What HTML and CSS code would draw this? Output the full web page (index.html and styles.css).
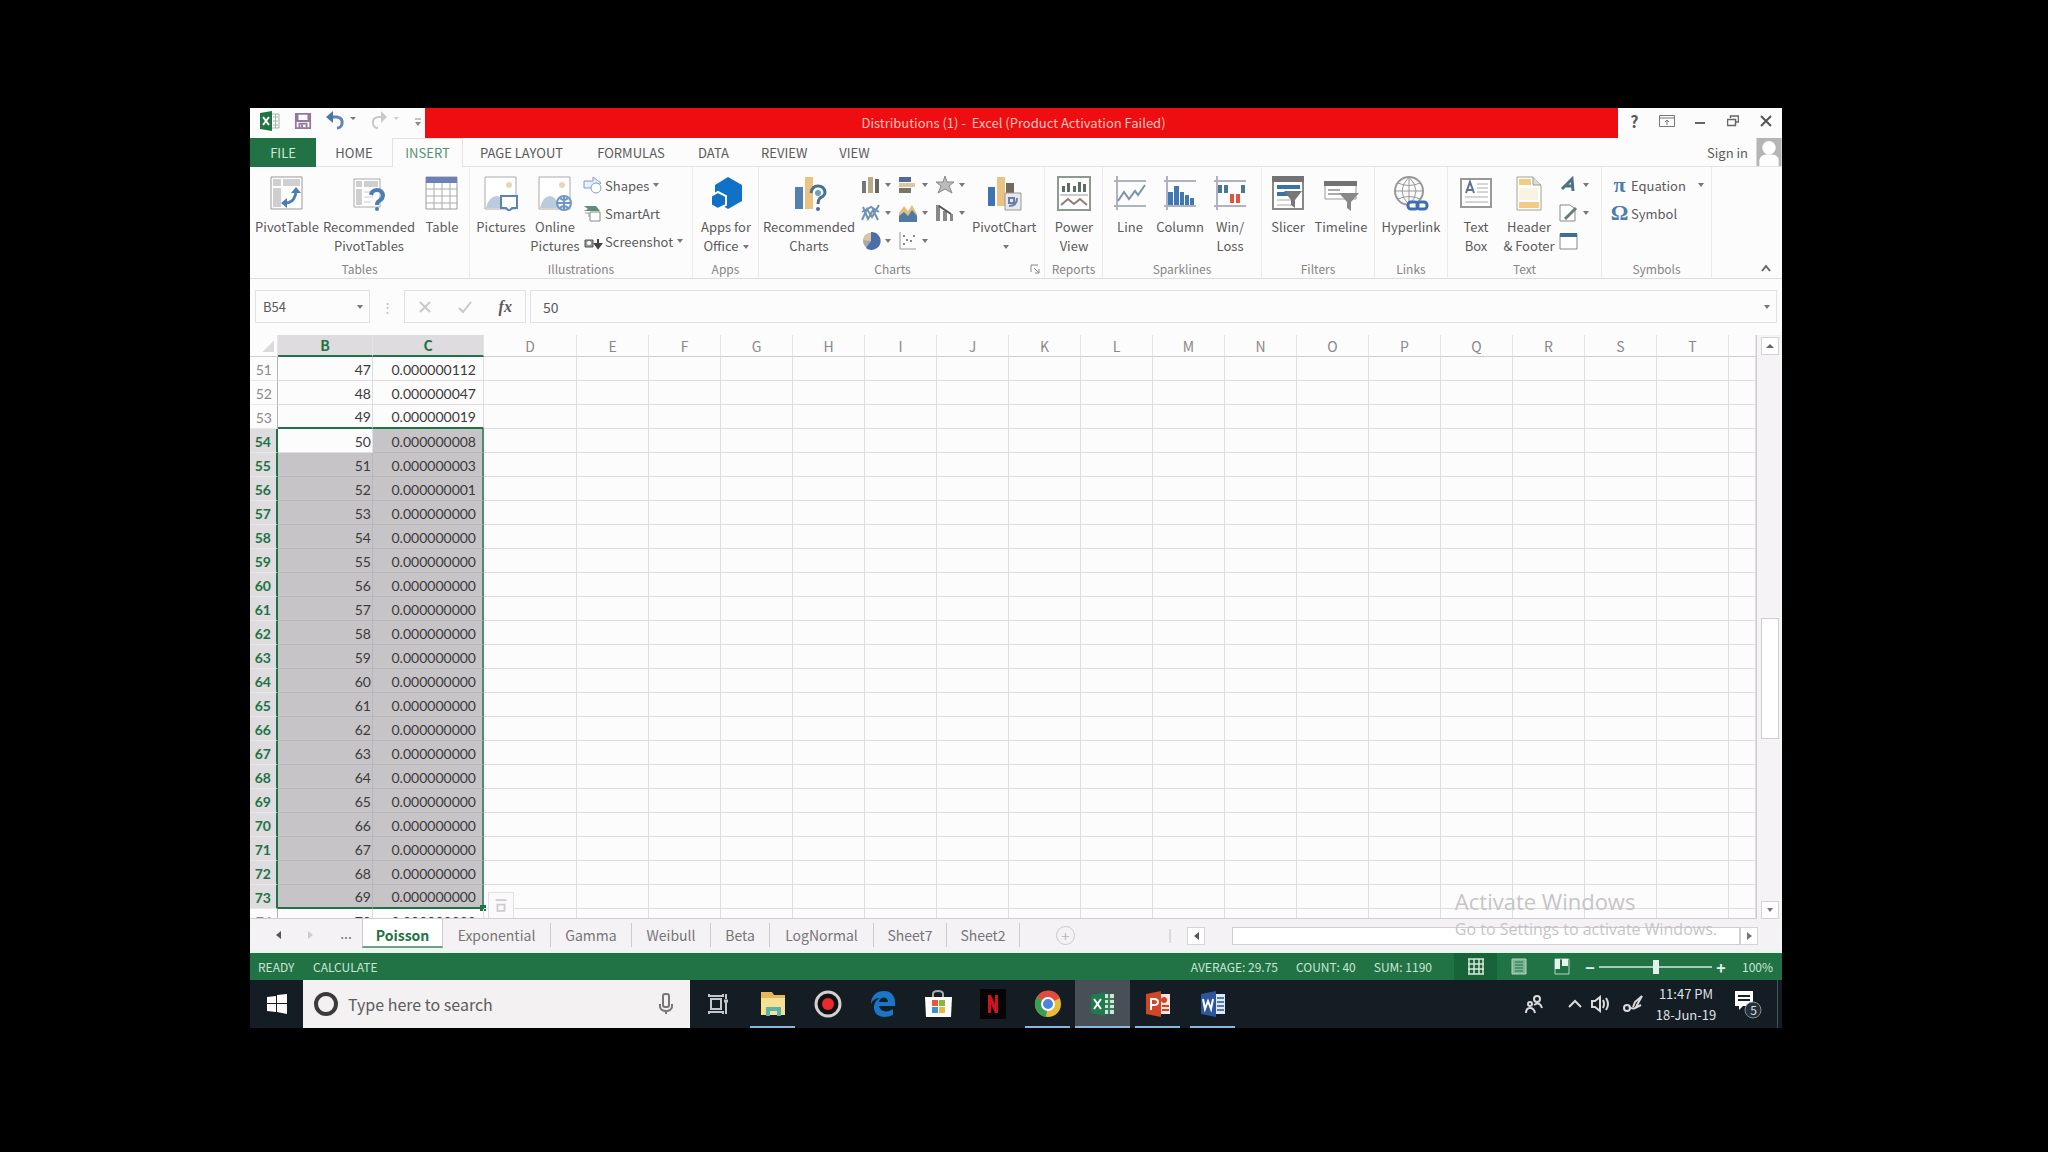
FILE: index.html
```html
<!DOCTYPE html>
<html lang="en">
<head>
  <meta charset="UTF-8" />
  <meta name="viewport" content="width=device-width, initial-scale=1.0" />
  <title>Distributions (1) - Excel</title>
  <link rel="stylesheet" href="styles.css">
</head>
<body>
<div class="screen">

  <!-- title bar -->
  <header class="titlebar">
    <div class="quick">
      <button aria-label="Excel"><svg width="20" height="20" viewBox="0 0 20 20"><path d="M0 2l12-2v20L0 18z" fill="#217346"/><path d="M12 3h7v14h-7" fill="#fff" stroke="#9bb8a6"/><path d="M13 6h5M13 10h5M13 14h5M15.500 3v14" stroke="#9bb8a6"/><path d="M3 6l6 8M9 6l-6 8" stroke="#fff" stroke-width="2"/></svg></button>
      <button aria-label="Save"><svg width="18" height="18" viewBox="0 0 20 20" fill="none" stroke="#94789f" stroke-width="2"><path d="M2 2h16v16H2zM4 2v8h12V2M6 18v-5h8v5M9 14v4"/></svg></button>
      <button class="wide" aria-label="Undo"><svg width="30" height="20" viewBox="0 0 30 20"><path d="M3 6h8q6 1 5 7q-1 4-5 4" fill="none" stroke="#5f84b0" stroke-width="3"/><path d="M0 6l7-6v12z" fill="#4b76a8"/><path d="M24 6h6l-3 3z" fill="#777"/></svg></button>
      <button class="wide" aria-label="Redo"><svg width="30" height="20" viewBox="0 0 30 20"><path d="M14 6H8q-6 1-5 7q1 4 5 4" fill="none" stroke="#c9c9c9" stroke-width="2"/><path d="M17 6l-6-6v12z" fill="#c9c9c9"/><path d="M24 6h5l-3 3z" fill="#ccc"/></svg></button>
      <button class="tiny" aria-label="Customize"><svg width="8" height="12" viewBox="0 0 8 12"><path d="M1 4h6" stroke="#888"/><path d="M1 7h6l-3 4z" fill="#888"/></svg></button>
    </div>
    <h1 class="title">Distributions (1) -&nbsp; Excel (Product Activation Failed)</h1>
    <div class="window-buttons">
      <button class="help" aria-label="Help">?</button>
      <button aria-label="Ribbon display"><svg width="16" height="12" viewBox="0 0 16 12" fill="none" stroke="#777"><path d="M.5.5h15v11H.5zM1 3h14M8 10V5M6 7l2-2 2 2" /></svg></button>
      <button aria-label="Minimize"><svg width="12" height="12" viewBox="0 0 12 12"><path d="M1 8h10" stroke="#666" stroke-width="2"/></svg></button>
      <button aria-label="Restore"><svg width="12" height="12" viewBox="0 0 12 12" fill="none" stroke="#666"><path d="M3.500 3V1h8v6h-3M.5 4.500h8v6h-8z" stroke-width="1.500"/></svg></button>
      <button aria-label="Close"><svg width="12" height="12" viewBox="0 0 12 12"><path d="M1 1l10 10M11 1L1 11" stroke="#555" stroke-width="2"/></svg></button>
    </div>
  </header>

  <nav class="tabs">
    <button class="file">FILE</button>
    <button class="home">HOME</button>
    <button class="active">INSERT</button>
    <button class="layout">PAGE LAYOUT</button>
    <button class="formulas">FORMULAS</button>
    <button>DATA</button>
    <button>REVIEW</button>
    <button>VIEW</button>
    <a class="signin" href="#">Sign in</a>
    <svg class="avatar" width="26" height="28" viewBox="0 0 26 29"><path d="M0 0h26v29H0z" fill="#b5b5b5"/><circle cx="13" cy="10" r="7" fill="#fff"/><path d="M3 29v-6q1-5 6-6h8q6 1 6 6v6z" fill="#fff"/></svg>
  </nav>

  <!-- ribbon -->
  <section class="ribbon">
    <div class="group g-tables">
      <div class="tools">
        <button class="big w70"><svg width="36" height="36" viewBox="0 0 36 36"><path d="M2 2h31v32H2z" fill="#fff" stroke="#999"/><path d="M4 4h8v7H4zM14 4h17v7H14zM4 13h8v19H4z" fill="#d0cfd0"/><path d="M14 28q12 1 13-12" fill="none" stroke="#4a7fb5" stroke-width="3"/><path d="M22 18l5-6 5 6zM18 23l-6 5 6 5z" fill="#4a7fb5"/></svg>PivotTable</button>
        <button class="big w94"><svg width="36" height="36" viewBox="0 0 36 36"><path d="M3 4h26v28H3z" fill="#fff" stroke="#aaa"/><path d="M5 6h6v6H5zM13 6h14v6H13zM5 14h6v16H5z" fill="#d0cfd0"/><path d="M13 17h9M13 22h9M13 27h7" stroke="#ccc"/><path d="M20 20q1-5 6-5t6 5q0 4-4 6-2 1-2 4" fill="none" stroke="#4a7fb5" stroke-width="4"/><circle cx="26" cy="34" r="2" fill="#4a7fb5"/></svg>Recommended<br>PivotTables</button>
        <button class="big w52"><svg width="36" height="36" viewBox="0 0 36 36"><path d="M2 2h31v32H2z" fill="#fff" stroke="#999"/><path d="M2 2h31v6H2z" fill="#6b7fb8"/><path d="M2 14h31M2 21h31M2 28h31M10 8v26M18 8v26M26 8v26" stroke="#aaa"/></svg>Table</button>
      </div>
      <div class="caption">Tables</div>
    </div>

    <div class="group g-illus">
      <div class="tools">
        <button class="big w58"><svg width="36" height="36" viewBox="0 0 36 36"><path d="M2 2h31v32H2z" fill="#fff" stroke="#aaa"/><circle cx="26" cy="10" r="3" fill="#e3d9b8"/><path d="M3 33q3-12 11-12 6 0 9 12z" fill="#b9cbdc"/><path d="M18 21h16v12h-5l-3 3-3-3h-5z" fill="#fff" stroke="#5b83b3" stroke-width="2"/></svg>Pictures</button>
        <button class="big w50"><svg width="36" height="36" viewBox="0 0 36 36"><path d="M2 2h31v32H2z" fill="#fff" stroke="#aaa"/><circle cx="25" cy="10" r="3" fill="#e3d9b8"/><path d="M3 33q3-12 10-12 6 0 9 12z" fill="#b9cbdc"/><g fill="#fff" stroke="#6f96c4" stroke-width="2"><circle cx="27" cy="28" r="7"/><path d="M20 28h14M27 21v14M23 23q4 4 8 0M23 33q4-4 8 0"/></g></svg>Online<br>Pictures</button>
        <div class="stack">
          <button class="small"><svg width="20" height="18" viewBox="0 0 20 18"><path d="M1 5h9V1l8 6-7 5H1z" fill="#e7eef6" stroke="#7f9fc4"/><circle cx="13" cy="12" r="5" fill="#fff" stroke="#7f9fc4"/></svg>Shapes<i></i></button>
          <button class="small"><svg width="20" height="18" viewBox="0 0 20 18"><path d="M1 2h12l4 5H1l4-2z" fill="#5c8f79"/><path d="M7 8h10v9H7z" fill="#fff" stroke="#888"/><path d="M2 9h4v4" fill="none" stroke="#999"/></svg>SmartArt</button>
          <button class="small"><svg width="20" height="18" viewBox="0 0 20 18"><path d="M2 8h8v7H2z" fill="#999" stroke="#555"/><circle cx="6" cy="11" r="2" fill="#fff"/><path d="M15 7v8M12 12h6M15 16l-3-4h6z" stroke="#444" stroke-width="2"/></svg>Screenshot<i></i></button>
        </div>
      </div>
      <div class="caption">Illustrations</div>
    </div>

    <div class="group g-apps">
      <div class="tools">
        <button class="big w62"><svg width="36" height="36" viewBox="0 0 36 36"><path d="M20 2l14 8v16l-14 8-13-8V10z" fill="#0f72c6"/><path d="M10 17l8 4v9l-8 4-7-4v-9z" fill="#0f72c6" stroke="#fff" stroke-width="2"/></svg>Apps for<br>Office<i></i></button>
      </div>
      <div class="caption">Apps</div>
    </div>

    <div class="group g-charts">
      <div class="tools">
        <button class="big w96"><svg width="36" height="36" viewBox="0 0 36 36"><path d="M4 12h8v22H4z" fill="#5480b2"/><path d="M14 2h8v32h-8z" fill="#eac282"/><path d="M20 18q1-7 7-7t7 6q0 4-5 6-2 2-2 6" fill="none" stroke="#47718f" stroke-width="3"/><circle cx="27" cy="18" r="3" fill="#6a9fc0"/><circle cx="27" cy="34" r="2" fill="#47718f"/></svg>Recommended<br>Charts</button>
        <div class="chart-grid">
          <button aria-label="Column chart"><svg width="20" height="20" viewBox="0 0 20 20"><path d="M1 6h4v12H1z" fill="#777"/><path d="M7 2h5v16H7z" fill="#b9a988"/><path d="M14 4h4v14h-4z" fill="#666"/></svg><i></i></button>
          <button aria-label="Bar chart"><svg width="20" height="20" viewBox="0 0 20 20"><path d="M1 2h12v5H1z" fill="#53689c"/><path d="M1 8h16v4H1z" fill="#dcc79f"/><path d="M1 13h12v5H1z" fill="#77756a"/></svg><i></i></button>
          <button aria-label="Radar chart"><svg width="20" height="20" viewBox="0 0 20 20"><path d="M10 1l2 6 7 0-5 4 3 7-7-4-7 4 3-7-5-4h7z" fill="#bbb" stroke="#888"/></svg><i></i></button>
          <button aria-label="Line chart"><svg width="20" height="20" viewBox="0 0 20 20" fill="none" stroke="#6f93b3" stroke-width="2"><path d="M1 17l5-11 5 8 7-12M2 4l5 12 5-9 5 10M1 9l9-5 8 5"/></svg><i></i></button>
          <button aria-label="Area chart"><svg width="20" height="20" viewBox="0 0 20 20"><path d="M1 10l5-7 4 5 4-6 5 9v8H1z" fill="#e0bf83"/><path d="M1 13l5-4 4 4 4-6 5 6v6H1z" fill="#4e7aa6"/></svg><i></i></button>
          <button aria-label="Combo chart"><svg width="20" height="20" viewBox="0 0 20 20"><path d="M1 2h4v16H1zM8 8h4v10H8zM15 11h3v7h-3z" fill="#888"/><path d="M4 3l12 8" stroke="#555" stroke-width="2"/></svg><i></i></button>
          <button aria-label="Pie chart"><svg width="20" height="20" viewBox="0 0 20 20"><circle cx="10" cy="10" r="8" fill="#a8a8a8"/><path d="M10 10V1a9 9 0 1 1-5 16z" fill="#4a6fa8"/><path d="M10 10V2a8 8 0 0 0-8 7z" fill="#dac59d"/></svg><i></i></button>
          <button aria-label="Scatter chart"><svg width="20" height="20" viewBox="0 0 20 20"><path d="M2 1v17h16" fill="none" stroke="#999"/><g fill="#888"><path d="M5 12h2v2H5zM8 8h2v2H8zM12 9h2v2h-2zM15 4h2v2h-2zM5 4h2v2H5z"/></g></svg><i></i></button>
        </div>
        <button class="big w64"><svg width="36" height="36" viewBox="0 0 36 36"><path d="M2 12h7v19H2z" fill="#3e74b0"/><path d="M11 2h8v29h-8z" fill="#eac282"/><path d="M20 8h8v12h-8z" fill="#716a60"/><path d="M19 18h16v17H19z" fill="#e8e8ee" stroke="#999"/><path d="M23 31q8 0 8-8M23 23h5v5h-5z" fill="none" stroke="#6a7fa8" stroke-width="2"/></svg>PivotChart<br><i></i></button>
      </div>
      <div class="caption">Charts</div>
      <button class="launcher" aria-label="Chart options"><svg width="10" height="10" viewBox="0 0 10 10"><path d="M1 8V1h7M4 4l5 5M9 5v4H5" fill="none" stroke="#888"/></svg></button>
    </div>

    <div class="group g-reports">
      <div class="tools">
        <button class="big w54"><svg width="36" height="36" viewBox="0 0 36 36"><path d="M2 2h32v33H2z" fill="#fff" stroke="#8d9a90" stroke-width="2"/><path d="M6 11h3v6H6zM11 8h3v9h-3zM17 11h3v6h-3zM22 7h3v10h-3zM27 9h3v8h-3z" fill="#5d6d63"/><path d="M4 20h28" stroke="#999"/><path d="M5 30l7-6 6 5 6-5 7 6" fill="none" stroke="#8d7d77" stroke-width="2"/></svg>Power<br>View</button>
      </div>
      <div class="caption">Reports</div>
    </div>

    <div class="group g-spark">
      <div class="tools">
        <button class="big w50"><svg width="36" height="36" viewBox="0 0 36 36" fill="none"><path d="M5 1v34M2 6h32M2 31h32" stroke="#b0b2c0" stroke-width="2"/><path d="M6 26l6-9 5 7 6-8 3 4 7-10" stroke="#7d90b4" stroke-width="2"/></svg>Line</button>
        <button class="big w50"><svg width="36" height="36" viewBox="0 0 36 36"><path d="M5 1v34M2 6h32M2 31h32" stroke="#b0b2c0" stroke-width="2"/><path d="M6 17h5v13H6zM12 11h5v19h-5zM18 17h4v13h-4zM23 20h4v10h-4zM28 23h4v7h-4z" fill="#3f78b4"/></svg>Column</button>
        <button class="big w50"><svg width="36" height="36" viewBox="0 0 36 36"><path d="M5 1v34M2 6h32M2 31h32" stroke="#b0b2c0" stroke-width="2"/><path d="M6 10h4v8H6zM12 10h4v8h-4zM29 10h4v8h-4z" fill="#4a7793"/><path d="M18 19h4v9h-4zM24 19h4v9h-4z" fill="#e0533f"/></svg>Win/<br>Loss</button>
      </div>
      <div class="caption">Sparklines</div>
    </div>

    <div class="group g-filters">
      <div class="tools">
        <button class="big w48"><svg width="36" height="36" viewBox="0 0 36 36"><path d="M3 2h30v32H3z" fill="#fff" stroke="#888" stroke-width="2"/><path d="M2 1h32v6H2z" fill="#737373"/><path d="M7 10h23v4H7zM7 17h16v4H7z" fill="#3b73a8"/><path d="M7 25h14M7 30h14" stroke="#aaa"/><path d="M14 16h18l-7 9v8l-4-3v-5z" fill="#777"/></svg>Slicer</button>
        <button class="big w58"><svg width="36" height="36" viewBox="0 0 36 36"><path d="M2 7h31v17H2z" fill="#fff" stroke="#999"/><path d="M1 6h33v5H1z" fill="#737373"/><path d="M5 15h12M5 19h12" stroke="#aaa" stroke-width="2"/><path d="M16 18h20l-8 9v9l-4-3v-6z" fill="#888"/></svg>Timeline</button>
      </div>
      <div class="caption">Filters</div>
    </div>

    <div class="group g-links">
      <div class="tools">
        <button class="big w68"><svg width="36" height="36" viewBox="0 0 36 36" fill="none"><g stroke="#999" stroke-width="2"><circle cx="16" cy="16" r="14"/><path d="M2 16h28M16 2v28M5 8q11 5 22 0M5 24q11-5 22 0M16 2q-14 14 0 28M16 2q14 14 0 28" stroke-width="1"/></g><path d="M15 27h22v10H15z" fill="#fff"/><g stroke="#3c70b4" stroke-width="3"><rect x="15" y="27" width="10" height="7" rx="3"/><rect x="24" y="27" width="10" height="7" rx="3"/></g></svg>Hyperlink</button>
      </div>
      <div class="caption">Links</div>
    </div>

    <div class="group g-text">
      <div class="tools">
        <button class="big w52"><svg width="36" height="36" viewBox="0 0 36 36"><path d="M3 4h30v28H3z" fill="#fff" stroke="#999" stroke-width="2"/><path d="M8 18l4-11 4 11M9 15h6" fill="none" stroke="#5e7287" stroke-width="2"/><path d="M19 9h11M19 13h11M19 17h11M7 22h23M7 27h23" stroke="#aaa"/></svg>Text<br>Box</button>
        <button class="big w54"><svg width="36" height="36" viewBox="0 0 36 36"><path d="M6 2h16l8 8v25H6z" fill="#fff" stroke="#a9a08c"/><path d="M8 4h12v6H8zM8 27h20v6H8z" fill="#f2cc85"/><path d="M22 2v8h8" fill="#ddd" stroke="#999"/><path d="M8 13h19v12H8z" fill="#f9f3e4"/></svg>Header<br>&amp; Footer</button>
        <div class="stack">
          <button class="small" aria-label="WordArt"><svg width="20" height="18" viewBox="0 0 20 18"><path d="M3 13L13 3l1 12M7 10h7" fill="none" stroke="#4f7087" stroke-width="3"/></svg><i></i></button>
          <button class="small" aria-label="Signature line"><svg width="20" height="18" viewBox="0 0 20 18"><path d="M1 1h10l5 4v12H1z" fill="#fff" stroke="#888"/><path d="M6 15L17 4" stroke="#687e72" stroke-width="3"/></svg><i></i></button>
          <button class="small" aria-label="Object"><svg width="20" height="18" viewBox="0 0 20 18"><path d="M1 2h17v15H1z" fill="#fff" stroke="#888"/><path d="M1 1h17v4H1z" fill="#3d6d9c"/></svg></button>
        </div>
      </div>
      <div class="caption">Text</div>
    </div>

    <div class="group g-symbols">
      <div class="tools">
        <div class="stack">
          <button class="small"><b>π</b>Equation<i class="far"></i></button>
          <button class="small"><b>Ω</b>Symbol</button>
        </div>
      </div>
      <div class="caption">Symbols</div>
    </div>
    <button class="collapse" aria-label="Collapse ribbon"><svg width="12" height="8" viewBox="0 0 12 8"><path d="M2 7l4-5 4 5" fill="none" stroke="#666" stroke-width="2"/></svg></button>
  </section>

  <!-- formula bar -->
  <div class="formula-bar">
    <div class="name-box"><input type="text" value="B54" aria-label="Name box"><i></i></div>
    <span class="dots">⋮</span>
    <div class="fx">
      <button aria-label="Cancel"><svg width="14" height="14" viewBox="0 0 14 14"><path d="M2 2l10 10M12 2L2 12" stroke="#c8c8c8" stroke-width="2"/></svg></button>
      <button aria-label="Enter"><svg width="14" height="14" viewBox="0 0 14 14"><path d="M1 8l4 4 8-10" fill="none" stroke="#c8c8c8" stroke-width="2"/></svg></button>
      <button class="fn" aria-label="Insert function">fx</button>
    </div>
    <div class="entry"><input type="text" value="50" aria-label="Formula"><i></i></div>
  </div>

  <!-- worksheet -->
  <main class="sheet">
    <div class="grid">
      <table>
        <colgroup>
          <col class="c-num"><col class="c-b"><col class="c-c"><col class="c-d">
          <col class="c-std" span="16"><col>
        </colgroup>
        <thead><tr id="letters"></tr></thead>
        <tbody id="rows"></tbody>
      </table>
    </div>
    <div class="vscroll">
      <button aria-label="Scroll up"><i class="up"></i></button>
      <div class="thumb"></div>
      <button aria-label="Scroll down"><i></i></button>
    </div>
    <div class="watermark">
      <p class="big-line">Activate Windows</p>
      <p>Go to Settings to activate Windows.</p>
    </div>
  </main>

  <div class="sheet-tabs">
    <button class="arrow" aria-label="Previous sheet"><i class="left"></i></button>
    <button class="arrow off" aria-label="Next sheet"><i class="right"></i></button>
    <button class="arrow more">...</button>
    <button class="tab on">Poisson</button>
    <button class="tab t108">Exponential</button>
    <button class="tab t81">Gamma</button>
    <button class="tab t79">Weibull</button>
    <button class="tab t59">Beta</button>
    <button class="tab t104">LogNormal</button>
    <button class="tab t73">Sheet7</button>
    <button class="tab t73">Sheet2</button>
    <button class="add" aria-label="New sheet">+</button>
    <div class="hscroll">
      <span class="grip"></span>
      <button aria-label="Scroll left"><i class="left"></i></button>
      <div class="thumb"></div>
      <button aria-label="Scroll right"><i class="right"></i></button>
    </div>
  </div>

  <footer class="status">
    <span class="ready">READY</span>
    <span>CALCULATE</span>
    <div class="stats"><span>AVERAGE: 29.75</span><span>COUNT: 40</span><span>SUM: 1190</span></div>
    <button class="view on" aria-label="Normal"><svg width="16" height="17" viewBox="0 0 16 17"><path d="M0 1h16M0 6h16M0 11h16M0 16h16M1 1v15M6 1v15M11 1v15M15 1v15" stroke="#d5eadc" stroke-width="1.500"/></svg></button>
    <button class="view" aria-label="Page layout"><svg width="16" height="17" viewBox="0 0 16 17"><path d="M1 1h14v15H1z" fill="#7fb594" stroke="#b5d6c2"/><path d="M4 4h8M4 7h8M4 10h8M4 13h8" stroke="#217346"/></svg></button>
    <button class="view" aria-label="Page break"><svg width="16" height="17" viewBox="0 0 16 17"><path d="M1 1h14v15H1z" fill="none" stroke="#b5d6c2"/><path d="M1 1h5v10H1zM8 1h6v7H8z" fill="#e8f5ed"/></svg></button>
    <div class="zoom"><button aria-label="Zoom out">−</button><input type="range" min="0" max="100" value="50" aria-label="Zoom"><button aria-label="Zoom in">+</button></div>
    <span class="percent">100%</span>
  </footer>

  <!-- windows taskbar -->
  <div class="taskbar">
    <button class="start" aria-label="Start"><svg width="20" height="20" viewBox="0 0 20 20"><path d="M0 3l9-1v7H0zM10 1l10-1v9H10zM0 10h9v8l-9-1zM10 10h10v10l-10-2z" fill="#fff"/></svg></button>
    <label class="search">
      <svg width="26" height="28" viewBox="0 0 26 28"><circle cx="13" cy="14" r="10" fill="none" stroke="#3c3a3c" stroke-width="4"/></svg>
      <input type="text" placeholder="Type here to search">
      <svg width="16" height="22" viewBox="0 0 16 22" fill="none" stroke="#777" stroke-width="2"><rect x="5" y="1" width="6" height="13" rx="2"/><path d="M2 11v3q1 4 6 4t6-4v-3M8 18v3"/></svg>
    </label>
    <button class="app" aria-label="Task view"><svg width="22" height="22" viewBox="0 0 22 22" fill="none" stroke="#c4c8cc" stroke-width="2"><path d="M4 6h10v10H4zM2 1v2h14V1M2 21v-2h14v2M19 1v5M19 9v12"/><path d="M17 8h4" stroke-width="3"/></svg></button>
    <button class="app open" aria-label="File Explorer"><svg width="28" height="28" viewBox="0 0 28 28"><path d="M2 2h11l2 3h11v20H2z" fill="#e4b95c"/><path d="M2 8h24v17H2z" fill="#f8df96"/><path d="M7 17h15v9h-4v-5h-7v5H7z" fill="#58b4a8"/></svg></button>
    <button class="app" aria-label="Recorder"><svg width="28" height="30" viewBox="0 0 28 30"><circle cx="14" cy="15" r="12" fill="#111" stroke="#d2cfcf" stroke-width="3"/><circle cx="14" cy="15" r="6" fill="#ed2930"/></svg></button>
    <button class="app" aria-label="Edge"><svg width="28" height="28" viewBox="0 0 28 28"><path d="M2 14C2 5 8 1 15 1c8 0 12 6 11 15H10c1 6 9 7 14 3v6C15 29 4 27 5 16c1-5 4-7 6-8-5 0-8 3-9 6zm8-2h9c0-6-8-6-9 0z" fill="#1976c8"/></svg></button>
    <button class="app" aria-label="Store"><svg width="28" height="30" viewBox="0 0 28 30"><path d="M9 8V5q0-3 5-3t5 3v3" fill="none" stroke="#aaa" stroke-width="2"/><path d="M1 8h27l-1 20H2z" fill="#fff"/><path d="M8 11h6v6H8z" fill="#e65a3c"/><path d="M15 11h6v6h-6z" fill="#8ab83e"/><path d="M8 18h6v6H8z" fill="#3a94d2"/><path d="M15 18h6v6h-6z" fill="#eab83c"/></svg></button>
    <button class="app" aria-label="Netflix"><svg width="28" height="30" viewBox="0 0 28 30"><path d="M1 0h26v30H1z" fill="#050505"/><path d="M9 6h3l4 9V6h3v18h-3l-4-9v9H9z" fill="#cf1320"/></svg></button>
    <button class="app open" aria-label="Chrome"><svg width="28" height="30" viewBox="0 0 28 30"><circle cx="14" cy="15" r="13" fill="#e8b93a"/><path d="M14 15L3 8a13 13 0 0 1 23 1z" fill="#dc4c3f"/><path d="M14 15L3 8a13 13 0 0 0 9 20z" fill="#3f9a55"/><circle cx="14" cy="15" r="6" fill="#4a85e0" stroke="#fff" stroke-width="2"/></svg></button>
    <button class="app open current" aria-label="Excel"><svg width="28" height="28" viewBox="0 0 28 28"><path d="M2 5l14-3v24L2 23z" fill="#217a4c"/><path d="M16 4h9v20h-9z" fill="#cfe5d8"/><path d="M16 9h9M16 14h9M16 19h9M20 4v20" stroke="#39805a" stroke-width="2"/><path d="M5 9l7 10M12 9L5 19" stroke="#fff" stroke-width="2"/></svg></button>
    <button class="app open" aria-label="PowerPoint"><svg width="28" height="28" viewBox="0 0 28 28"><path d="M2 4l15-3v26L2 24z" fill="#d04727"/><path d="M17 4h9v20h-9z" fill="#f7e6e0"/><path d="M18 16h7M18 20h7" stroke="#d04727" stroke-width="2"/><circle cx="20" cy="10" r="3" fill="#d04727"/><path d="M7 20V9h3q4 0 4 3t-4 3H7" fill="none" stroke="#fff" stroke-width="2"/></svg></button>
    <button class="app open" aria-label="Word"><svg width="28" height="28" viewBox="0 0 28 28"><path d="M2 4l15-3v26L2 24z" fill="#2b579a"/><path d="M17 4h9v20h-9z" fill="#dfe8f6"/><path d="M18 8h7M18 12h7M18 16h7M18 20h7" stroke="#2b579a" stroke-width="1.500"/><path d="M4 9l2 10 3-8 3 8 2-10" fill="none" stroke="#fff" stroke-width="2"/></svg></button>

    <div class="tray">
      <button aria-label="People"><svg width="18" height="20" viewBox="0 0 18 20" fill="none" stroke="#d8dadc" stroke-width="2"><circle cx="12" cy="5" r="3"/><circle cx="5" cy="10" r="2"/><path d="M9 11q6-4 8 3M1 19q0-5 4-5t5 5"/></svg></button>
      <button class="caret" aria-label="Hidden icons"><svg width="14" height="10" viewBox="0 0 14 10"><path d="M1 8l6-6 6 6" fill="none" stroke="#d8dadc" stroke-width="2"/></svg></button>
      <button class="sound" aria-label="Volume"><svg width="20" height="18" viewBox="0 0 20 18" fill="none" stroke="#d8dadc" stroke-width="2"><path d="M1 6h3l5-4v14l-5-4H1zM12 5q2 4 0 8M15 3q4 6 0 12"/></svg></button>
      <button class="pen" aria-label="Ink"><svg width="20" height="20" viewBox="0 0 20 20" fill="none" stroke="#d8dadc" stroke-width="2"><circle cx="4" cy="14" r="3"/><path d="M6 13q6 4 8-2L19 2l-7 6-2 5M12 14l6-3"/></svg></button>
      <div class="clock">11:47 PM<br>18-Jun-19</div>
      <button class="notes" aria-label="Notifications"><svg width="30" height="30" viewBox="0 0 30 30"><path d="M1 2h18v15H9l-4 4v-4H1z" fill="#fff"/><path d="M4 7h12M4 11h12" stroke="#17222b" stroke-width="2"/><circle cx="19" cy="21" r="8" fill="#26303a" stroke="#888e94"/></svg><span>5</span></button>
    </div>
  </div>
</div>

<script src="script.js"></script>
</body>
</html>
```

FILE: styles.css
```css
* {
  box-sizing: border-box;
}

body {
  margin: 0;
  padding: 108px 266px 124px 250px;
  background: #000;
  color: #5a5a5a;
  font-family: "Noto Sans CJK JP", "Open Sans", sans-serif;
  font-size: 13px;
}

button,
input {
  font: inherit;
  color: inherit;
  border: 0;
  padding: 0;
  background: none;
  outline: none;
}

svg {
  display: block;
  flex: none;
}

/* small drop-down triangle */
i {
  display: inline-block;
  flex: none;
  border: 3px solid transparent;
  border-top: 4px solid #777;
  border-bottom: 0;
  margin-left: 4px;
  vertical-align: middle;
}

i.up {
  border: 4px solid transparent;
  border-bottom-color: #666;
  border-top: 0;
}

i.left,
i.right {
  border: 4px solid transparent;
  border-right: 5px solid #555;
  border-left: 0;
  margin: 0;
}

i.right {
  border-right: 0;
  border-left: 5px solid #777;
}

.screen {
  background: #fdfcfd;
  overflow: hidden;
}

/* title bar */
.titlebar {
  display: flex;
  height: 30px;
}

.quick {
  display: flex;
  align-items: center;
  gap: 14px;
  width: 175px;
  padding: 0 4px 4px 10px;
}

.title {
  flex: 1;
  margin: 0;
  padding-right: 16px;
  background: #ee0d10;
  color: #ffc4bd;
  font-size: 13px;
  font-weight: 400;
  line-height: 30px;
  text-align: center;
}

.window-buttons {
  display: flex;
  align-items: center;
  width: 164px;
  padding-bottom: 4px;
}

.window-buttons button {
  display: flex;
  justify-content: center;
  width: 33px;
}

.window-buttons .help {
  font-size: 16px;
  font-weight: 700;
  line-height: 26px;
}

/* ribbon tabs */
.tabs {
  display: flex;
  height: 29px;
  border-bottom: 1px solid #e4e2e4;
}

.tabs button {
  height: 29px;
  padding: 0 16px;
  line-height: 29px;
  white-space: nowrap;
}

.tabs .file {
  width: 66px;
  background: #217346;
  color: #cfe8d8;
}

.tabs .home {
  width: 76px;
  padding: 0;
}

.tabs .active {
  width: 71px;
  padding: 0;
  background: #fdfcfd;
  border: 1px solid #e4e2e4;
  border-bottom: 0;
  color: #4f9273;
  line-height: 28px;
}

.tabs .layout {
  width: 117px;
}

.tabs .formulas {
  width: 102px;
}

.signin {
  margin-left: auto;
  color: inherit;
  line-height: 29px;
  text-decoration: none;
}

.avatar {
  margin-left: 8px;
}

/* ribbon */
.ribbon {
  display: flex;
  border-bottom: 1px solid #dedcde;
}

.group {
  position: relative;
  flex: none;
  padding: 4px 2px 0;
  border-right: 1px solid #eceaec;
}

.g-tables { width: 220px; }
.g-illus { width: 223px; }
.g-apps { width: 66px; }
.g-charts { width: 286px; }
.g-reports { width: 58px; }
.g-spark { width: 159px; }
.g-filters { width: 113px; }
.g-links { width: 73px; }
.g-text { width: 154px; }
.g-symbols { width: 110px; }

.tools {
  display: flex;
  align-items: flex-start;
  height: 84px;
}

.caption {
  margin-top: 4px;
  color: #868486;
  font-size: 12px;
  line-height: 19px;
  text-align: center;
}

.g-charts .caption {
  padding-right: 18px;
}

.big {
  display: block;
  flex: none;
  padding-top: 4px;
  line-height: 19px;
  text-align: center;
  white-space: nowrap;
}

.big svg {
  margin: 0 auto 6px;
}

.w48 { width: 48px; }
.w50 { width: 50px; }
.w52 { width: 52px; }
.w54 { width: 54px; }
.w58 { width: 58px; }
.w62 { width: 62px; }
.w64 { width: 64px; }
.w68 { width: 68px; }
.w70 { width: 70px; }
.w94 { width: 94px; }
.w96 { width: 96px; }

.stack {
  padding-left: 3px;
}

.small {
  display: flex;
  align-items: center;
  height: 28px;
  gap: 2px;
  white-space: nowrap;
}

.small b {
  width: 19px;
  color: #4b7db3;
  font-family: "Liberation Serif", serif;
  font-size: 22px;
  font-weight: 700;
  line-height: 28px;
}

.small i {
  margin-left: 2px;
}

.small i.far {
  margin-left: 10px;
}

.g-symbols .stack {
  padding-left: 6px;
}

.chart-grid {
  display: grid;
  grid-template-columns: repeat(3, 37px);
  grid-auto-rows: 28px;
  margin-left: 4px;
}

.chart-grid button {
  display: flex;
  align-items: center;
}

.launcher {
  position: absolute;
  right: 4px;
  bottom: 4px;
}

.collapse {
  margin: auto 10px 6px auto;
}

/* formula bar */
.formula-bar {
  display: flex;
  height: 33px;
  margin: 11px 5px 12px;
}

.name-box,
.fx,
.entry {
  display: flex;
  align-items: center;
  border: 1px solid #e2e0e2;
}

.name-box {
  width: 115px;
  padding: 0 7px;
}

.name-box input {
  width: 90px;
}

.dots {
  width: 34px;
  color: #bbb;
  line-height: 33px;
  text-align: center;
}

.fx {
  width: 122px;
  justify-content: space-around;
}

.fn {
  font-family: "Liberation Serif", serif;
  font-size: 16px;
  font-style: italic;
  font-weight: 700;
}

.entry {
  flex: 1;
  margin-left: 4px;
  padding: 0 6px 0 12px;
}

.entry input {
  flex: 1;
  font-size: 14px;
}

/* worksheet */
.sheet {
  position: relative;
  display: flex;
  height: 584px;
  font-size: 14px;
}

.grid {
  flex: 1;
  height: 584px;
  overflow: hidden;
  border-right: 1px solid #d0ced0;
  border-bottom: 1px solid #d0ced0;
}

table {
  width: 100%;
  table-layout: fixed;
  border-spacing: 0;
}

.c-num { width: 28px; }
.c-b { width: 95px; }
.c-c { width: 111px; }
.c-d { width: 93px; }
.c-std { width: 72px; }

th {
  padding: 0;
  color: #8a888a;
  font-weight: 400;
}

thead th {
  height: 22px;
  border-right: 1px solid #e6e4e6;
  border-bottom: 1px solid #cfcdcf;
  line-height: 20px;
}

thead th.sel {
  border-bottom: 2px solid #217346;
}

th.sel {
  background: #dedcde;
  color: #217346;
  font-weight: 700;
}

.corner {
  width: 12px;
  height: 12px;
  margin-left: 12px;
  background: linear-gradient(135deg, transparent 50%, #dcdadc 50%);
}

tbody th {
  height: 24px;
  padding: 2px 5px 0 0;
  border-right: 1px solid #b5b3b5;
  border-bottom: 1px solid #e8e6e8;
  font-family: Lato, sans-serif;
  line-height: 21px;
  text-align: right;
}

tbody th.sel {
  border-right: 2px solid #217346;
}

td {
  position: relative;
  height: 24px;
  padding: 2px 1px 0 0;
  border-right: 1px solid #dfdde0;
  border-bottom: 1px solid #dfdde0;
  color: #3c3a3c;
  font-family: Lato, sans-serif;
  line-height: 20px;
  text-align: right;
}

td.val {
  padding-right: 7px;
}

td.picked {
  background: #c6c4c6;
  border-color: #b9b7b9;
}

td.picked.val {
  padding-right: 6px;
  border-right: 2px solid #4d8d6c;
}

tr.before td.edge,
tr.last td.edge {
  border-bottom: 2px solid #217346;
}

.handle {
  position: absolute;
  right: -4px;
  bottom: -4px;
  width: 6px;
  height: 6px;
  background: #217346;
}

.autofill {
  position: absolute;
  left: 4px;
  top: 7px;
  width: 26px;
  height: 27px;
  padding: 4px;
  background: #fbf9fb;
  border: 1px solid #e2e0e2;
}

.vscroll {
  display: flex;
  flex-direction: column;
  align-items: center;
  width: 25px;
  padding-top: 2px;
  background: #f5f3f5;
}

.vscroll button,
.hscroll button {
  display: flex;
  align-items: center;
  justify-content: center;
  width: 18px;
  height: 18px;
  background: #fff;
  border: 1px solid #d5d3d5;
}

.vscroll i {
  margin: 0;
}

.vscroll .thumb {
  width: 18px;
  height: 121px;
  margin: 263px 0 auto;
  background: #fff;
  border: 1px solid #cfcdcf;
}

.watermark {
  position: absolute;
  right: 65px;
  bottom: -22px;
  color: #c6c4c6;
  font-family: "Open Sans", sans-serif;
  font-size: 16px;
  line-height: 24px;
  pointer-events: none;
}

.watermark p {
  margin: 0;
}

.watermark .big-line {
  font-size: 22px;
  line-height: 32px;
}

/* sheet tabs */
.sheet-tabs {
  display: flex;
  height: 34px;
  padding-bottom: 4px;
  background: #f4f2f4;
  border-bottom: 3px solid #e6f7ec;
  color: #777577;
  font-size: 14px;
}

.arrow {
  width: 32px;
  padding-left: 24px;
}

.arrow.off {
  opacity: 0.3;
}

.arrow.more {
  width: 48px;
  padding-left: 16px;
}

.tab {
  height: 24px;
  margin-top: 4px;
  border-right: 1px solid #cccacc;
  line-height: 24px;
}

.tab.on {
  width: 81px;
  height: 29px;
  margin-top: 0;
  background: #fff;
  border: 1px solid #cccacc;
  border-top: 0;
  border-bottom: 2px solid #6fa086;
  color: #217346;
  font-weight: 700;
  line-height: 32px;
}

.t108 { width: 108px; }
.t81 { width: 81px; }
.t79 { width: 79px; }
.t59 { width: 59px; }
.t104 { width: 104px; }
.t73 { width: 73px; }

.add {
  width: 19px;
  height: 19px;
  margin: 7px 0 0 36px;
  border: 1px solid #cccacc;
  border-radius: 50%;
  color: #bbb;
  line-height: 16px;
}

.hscroll {
  display: flex;
  flex: 1;
  align-items: center;
  margin: 7px 24px 0 94px;
}

.hscroll .grip {
  width: 2px;
  height: 14px;
  margin-right: 16px;
  background: #dddbdd;
}

.hscroll .thumb {
  flex: 1;
  height: 18px;
  margin-left: 27px;
  background: #fff;
  border: 1px solid #cfcdcf;
}

/* status bar */
.status {
  display: flex;
  align-items: center;
  height: 27px;
  padding: 0 8px;
  background: #217346;
  color: #c9e6d4;
  font-size: 12px;
  line-height: 27px;
}

.ready {
  width: 55px;
}

.stats {
  display: flex;
  gap: 18px;
  margin-left: auto;
  padding-right: 22px;
}

.view {
  display: flex;
  align-items: center;
  justify-content: center;
  width: 43px;
  height: 27px;
}

.view.on {
  background: #18633a;
}

.zoom {
  display: flex;
  align-items: center;
  margin-right: 14px;
}

.zoom button {
  width: 14px;
  color: #e3f3e9;
  font-size: 16px;
  font-weight: 700;
  line-height: 24px;
}

.zoom input {
  width: 113px;
  height: 16px;
  margin: 0 2px;
  appearance: none;
  background: linear-gradient(#a8cdb6, #a8cdb6) center / 100% 2px no-repeat;
}

.zoom input::-webkit-slider-thumb {
  appearance: none;
  width: 6px;
  height: 14px;
  background: #e3f3e9;
}

.percent {
  width: 32px;
}

/* taskbar */
.taskbar {
  display: flex;
  height: 48px;
  background: #141c24;
}

.start {
  display: flex;
  align-items: center;
  justify-content: center;
  width: 53px;
}

.search {
  display: flex;
  align-items: center;
  width: 387px;
  padding: 0 16px 0 10px;
  background: #f3f1f2;
}

.search input {
  flex: 1;
  margin-left: 9px;
  font-size: 16px;
}

.search input::placeholder {
  color: #5e5c5e;
}

.app {
  display: flex;
  align-items: center;
  justify-content: center;
  width: 55px;
}

.app.open {
  background: linear-gradient(#86b9dc, #86b9dc) bottom / 45px 2px no-repeat;
}

.app.open.current {
  background: linear-gradient(#86b9dc, #86b9dc) bottom / 55px 2px no-repeat #465056;
}

.tray {
  display: flex;
  align-items: center;
  margin-left: auto;
  border-right: 1px solid #4a5258;
  padding-right: 13px;
  margin-right: 4px;
  color: #dfe1e3;
}

.caret {
  margin-left: 25px;
}

.sound {
  margin-left: 9px;
}

.pen {
  margin-left: 12px;
}

.clock {
  width: 64px;
  margin-left: 11px;
  line-height: 21px;
  text-align: center;
  white-space: nowrap;
}

.notes {
  position: relative;
  margin-left: 16px;
}

.notes span {
  position: absolute;
  right: 7px;
  bottom: 0;
  font-size: 12px;
  line-height: 18px;
}
```

FILE: script.js
```js
const letters = "BCDEFGHIJKLMNOPQRST".split("");
const head = document.getElementById("letters");
const body = document.getElementById("rows");

head.innerHTML = '<th><div class="corner"></div></th>' +
  letters.map((l, i) => `<th${i < 2 ? ' class="sel"' : ""}>${l}</th>`).join("") + "<th></th>";

const tail = { 51: "112", 52: "047", 53: "019", 54: "008", 55: "003", 56: "001" };

for (let r = 51; r <= 74; r++) {
  const sel = r >= 54 && r <= 73;
  const tr = document.createElement("tr");
  if (r === 53) tr.className = "before";
  if (r === 73) tr.className = "last";

  let html = `<th${sel ? ' class="sel"' : ""}>${r}</th>`;
  html += `<td class="edge${sel && r !== 54 ? " picked" : ""}">${r - 4}</td>`;
  html += `<td class="edge val${sel ? " picked" : ""}">0.000000${tail[r] || "000"}`;
  html += (r === 73 ? '<span class="handle"></span>' : "") + "</td>";
  for (let c = 0; c < 18; c++) {
    html += r === 73 && c === 0
      ? '<td><svg class="autofill" viewBox="0 0 18 18"><path d="M3 3h12M5 8h8v7H5z" fill="none" stroke="#ccc" stroke-width="2"/></svg></td>'
      : "<td></td>";
  }
  tr.innerHTML = html;
  body.appendChild(tr);
}
```
